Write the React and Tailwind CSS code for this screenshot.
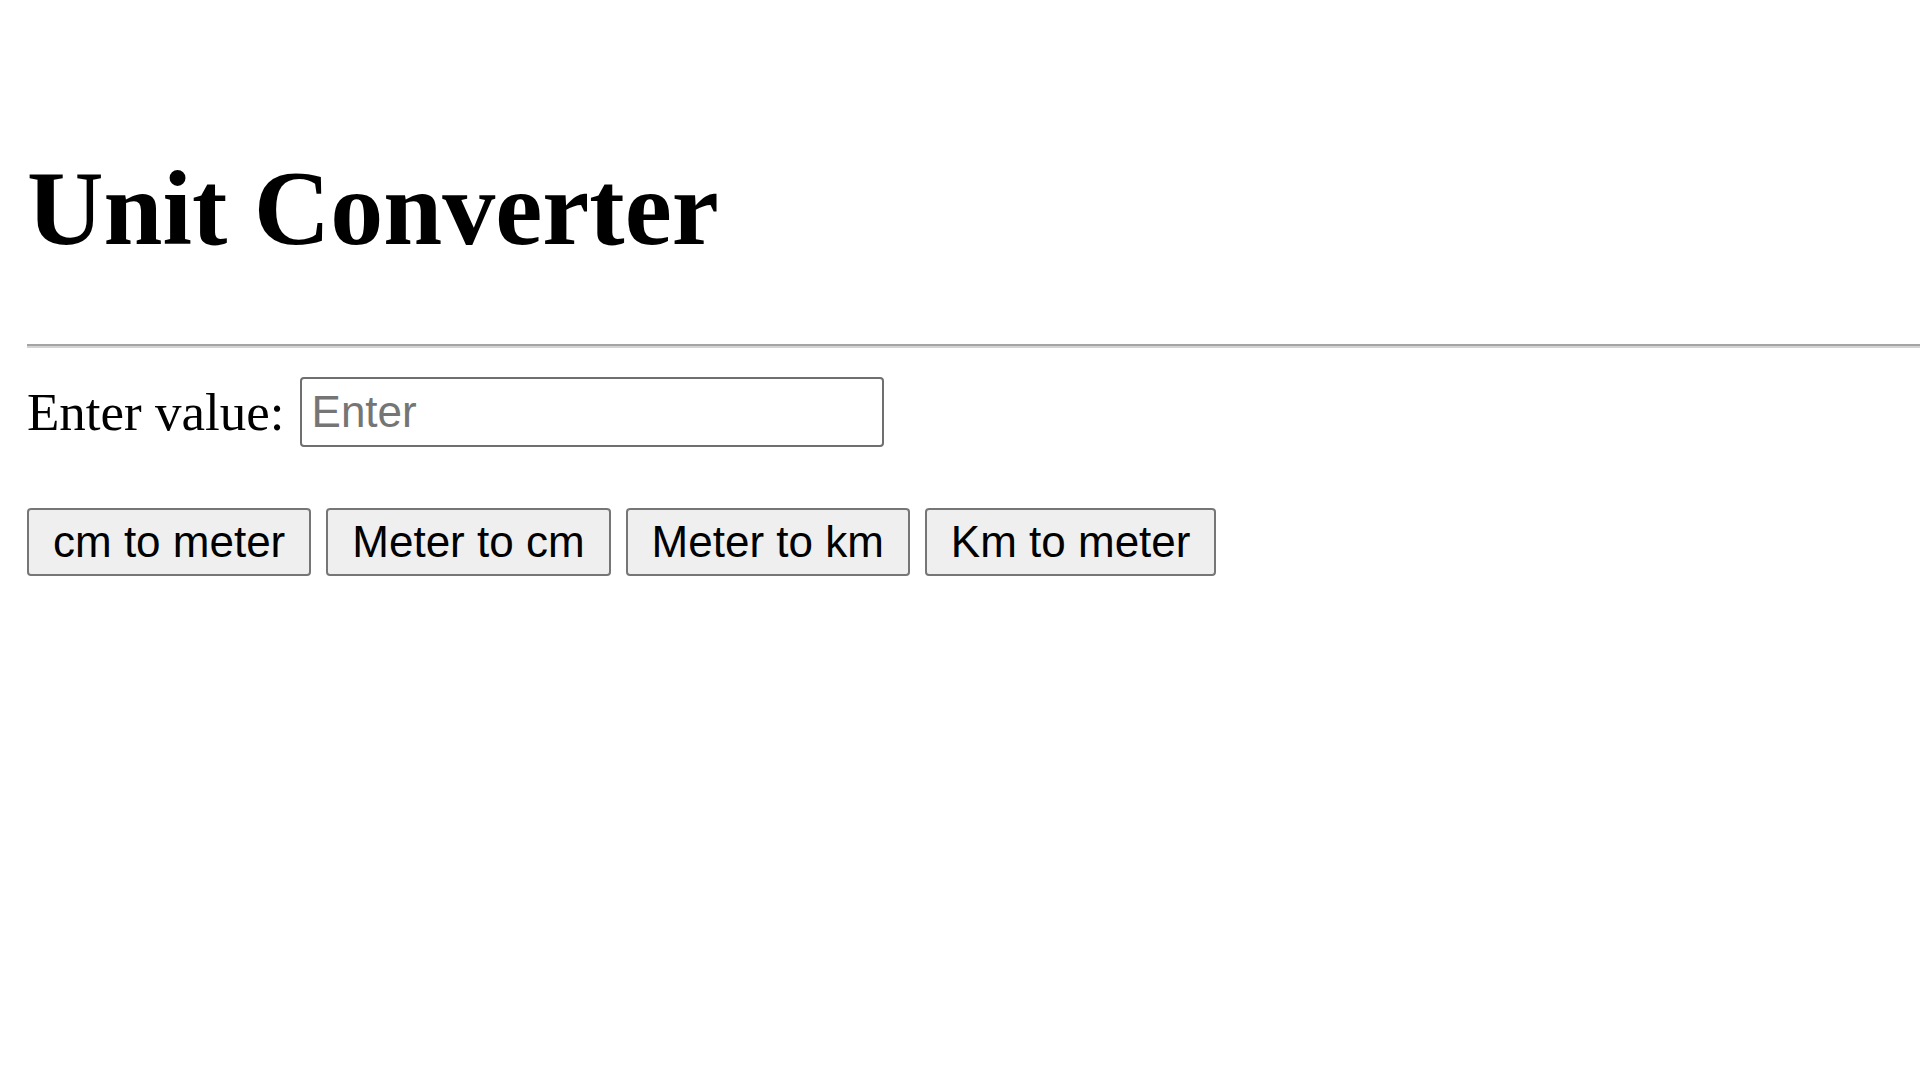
import React from 'react';

const conversions = ['cm to meter', 'Meter to cm', 'Meter to km', 'Km to meter'];

const App = () => {
  return (
    <div className="min-h-screen bg-white pl-[27px] text-black font-['Liberation_Serif',serif]">
      {/* Heading */}
      <h1 className="pt-[156px] text-[106px] leading-none font-bold">Unit Converter</h1>

      {/* Divider */}
      <div className="mt-[82px] h-[4px] border-t-[2px] border-[#a4a4a4] bg-[#d4d4d4]" />

      {/* Input row */}
      <div className="mt-[29px] flex items-center gap-[15px]">
        <label className="text-[53px] leading-none">Enter value:</label>
        <input
          type="text"
          placeholder="Enter"
          className="h-[70px] w-[584px] rounded-[4px] border-[2.5px] border-[#6f6f6f] px-[10px] text-[44px] font-['Liberation_Sans',sans-serif] placeholder:text-[#757575] outline-none"
        />
      </div>

      {/* Buttons */}
      <div className="mt-[61px] flex gap-[15px]">
        {conversions.map((c) => (
          <button
            key={c}
            className="h-[68px] rounded-[4px] border-[2.5px] border-[#767676] bg-[#efefef] px-[24px] text-[44px] leading-none font-['Liberation_Sans',sans-serif] text-black"
          >
            {c}
          </button>
        ))}
      </div>
    </div>
  );
};

export default App;
